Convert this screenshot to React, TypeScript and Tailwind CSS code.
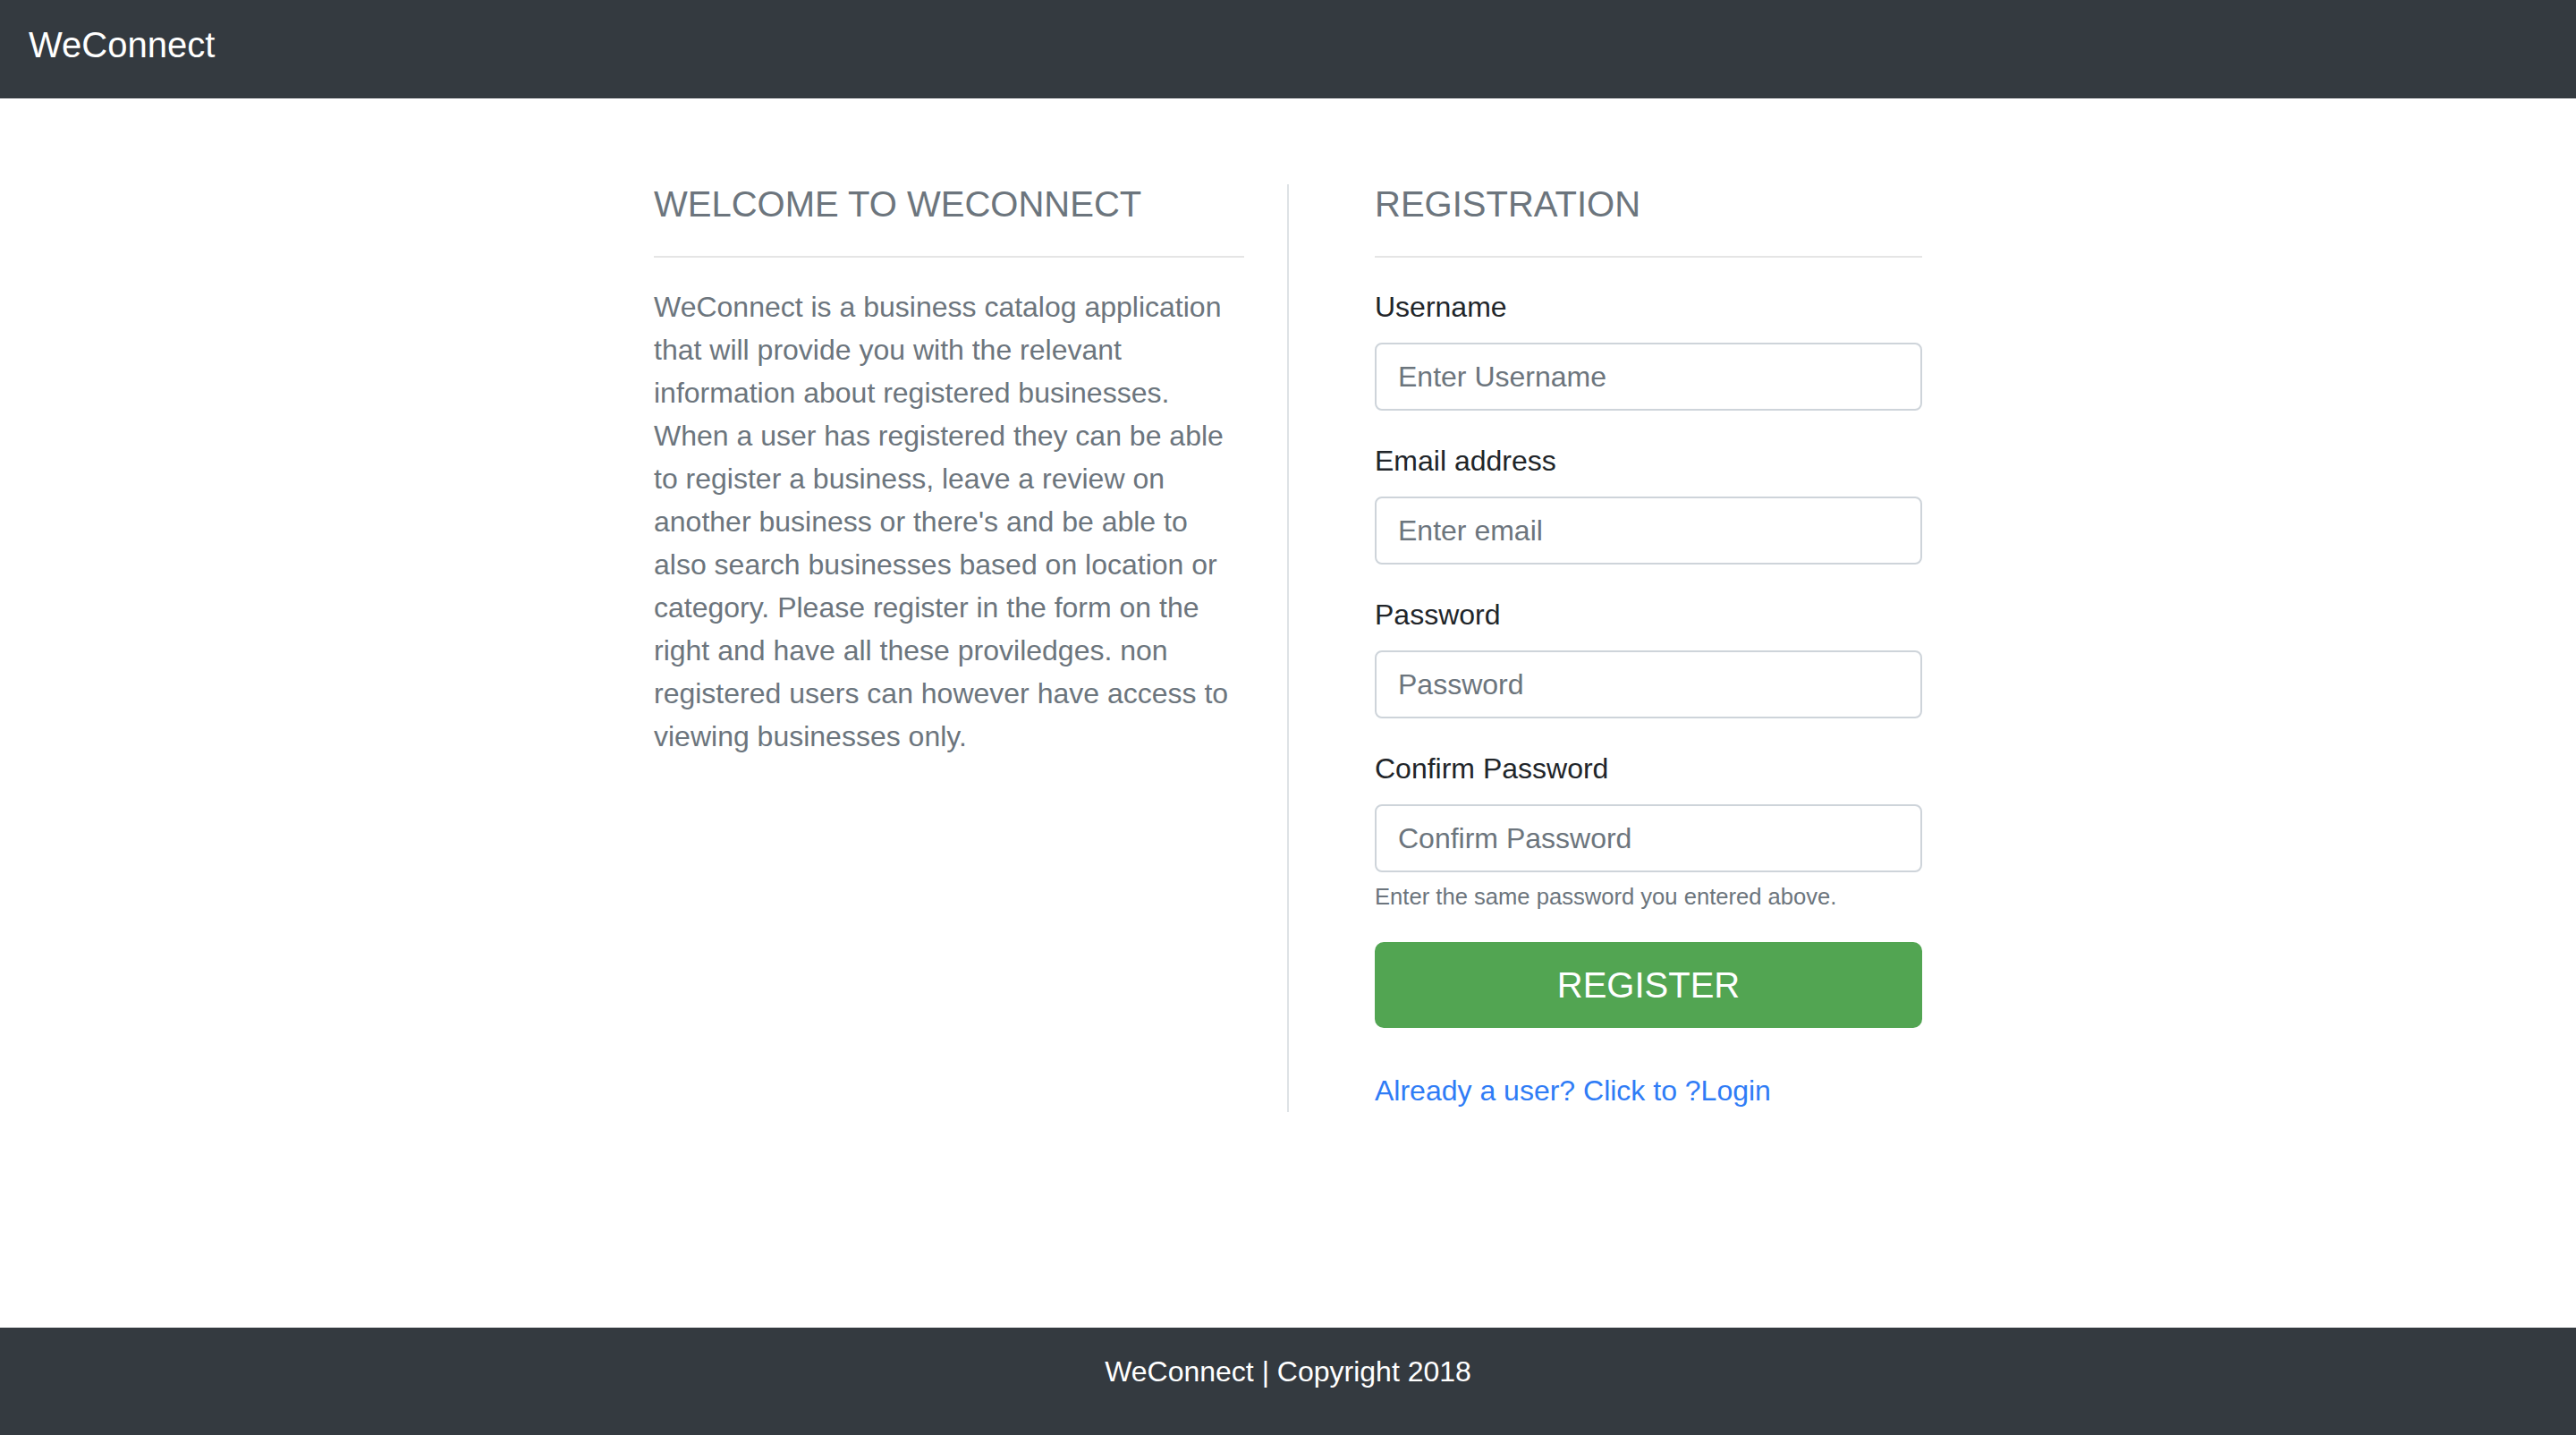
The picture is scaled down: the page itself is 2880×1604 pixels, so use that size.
import React from "react";

type FieldProps = {
  id: string;
  label: string;
  type: string;
  placeholder: string;
  help?: string;
};

const Field = ({ id, label, type, placeholder, help }: FieldProps) => (
  <div className="mb-8">
    <label htmlFor={id} className="mb-4 block text-[32px] leading-[48px] text-[#212529]">
      {label}
    </label>
    <input
      id={id}
      type={type}
      placeholder={placeholder}
      className="block h-[76px] w-full rounded-[8px] border-2 border-[#ced4da] bg-white px-6 text-[32px] leading-[48px] text-[#495057] outline-none placeholder:text-[#6c757d]"
    />
    {help && (
      <small className="mt-2 block text-[25.6px] leading-[38.4px] text-[#6c757d]">
        {help}
      </small>
    )}
  </div>
);

const App = () => {
  return (
    <div className="flex min-h-screen flex-col bg-white font-['Liberation_Sans',Arial,sans-serif]">
      <nav className="h-[110px] bg-[#343a40] px-8 pt-[26px]">
        <a href="#" className="text-[40px] leading-[48px] text-white">
          WeConnect
        </a>
      </nav>

      <main className="flex-1 pt-24">
        <div className="flex justify-center">
          <section className="w-[710px] border-r-2 border-[#dee2e6] pr-12">
            <h4 className="-mt-[2px] text-[40px] leading-[48px] text-[#6c757d]">
              WELCOME TO WECONNECT
            </h4>
            <hr className="mt-[34px] mb-8 border-t-2 border-[#e5e5e5]" />
            <p className="-mt-[1px] w-[658px] text-[32px] leading-[48px] text-[#6c757d]">
              WeConnect is a business catalog application that will provide you
              with the relevant information about registered businesses. When a
              user has registered they can be able to register a business, leave
              a review on another business or there's and be able to also search
              businesses based on location or category. Please register in the
              form on the right and have all these proviledges. non registered
              users can however have access to viewing businesses only.
            </p>
          </section>

          <section className="ml-24 w-[612px]">
            <h4 className="-mt-[2px] text-[40px] leading-[48px] text-[#6c757d]">
              REGISTRATION
            </h4>
            <hr className="mt-[34px] mb-8 border-t-2 border-[#e5e5e5]" />
            <form className="-mt-[1px]" onSubmit={(e) => e.preventDefault()}>
              <Field id="username" label="Username" type="text" placeholder="Enter Username" />
              <Field id="email" label="Email address" type="email" placeholder="Enter email" />
              <Field id="password" label="Password" type="password" placeholder="Password" />
              <Field
                id="confirm"
                label="Confirm Password"
                type="password"
                placeholder="Confirm Password"
                help="Enter the same password you entered above."
              />
              <button
                type="submit"
                className="flex h-[96px] w-full items-center justify-center rounded-[10px] bg-[#52a552] text-[40px] leading-[60px] text-white"
              >
                REGISTER
              </button>
            </form>
            <a href="#" className="mt-[46px] block text-[32px] leading-[48px] text-[#2f7cf6]">
              Already a user? Click to ?Login
            </a>
          </section>
        </div>
      </main>

      <footer className="h-[120px] bg-[#343a40] pt-[25px] text-center text-[32px] leading-[48px] text-white">
        WeConnect | Copyright 2018
      </footer>
    </div>
  );
};

export default App;
